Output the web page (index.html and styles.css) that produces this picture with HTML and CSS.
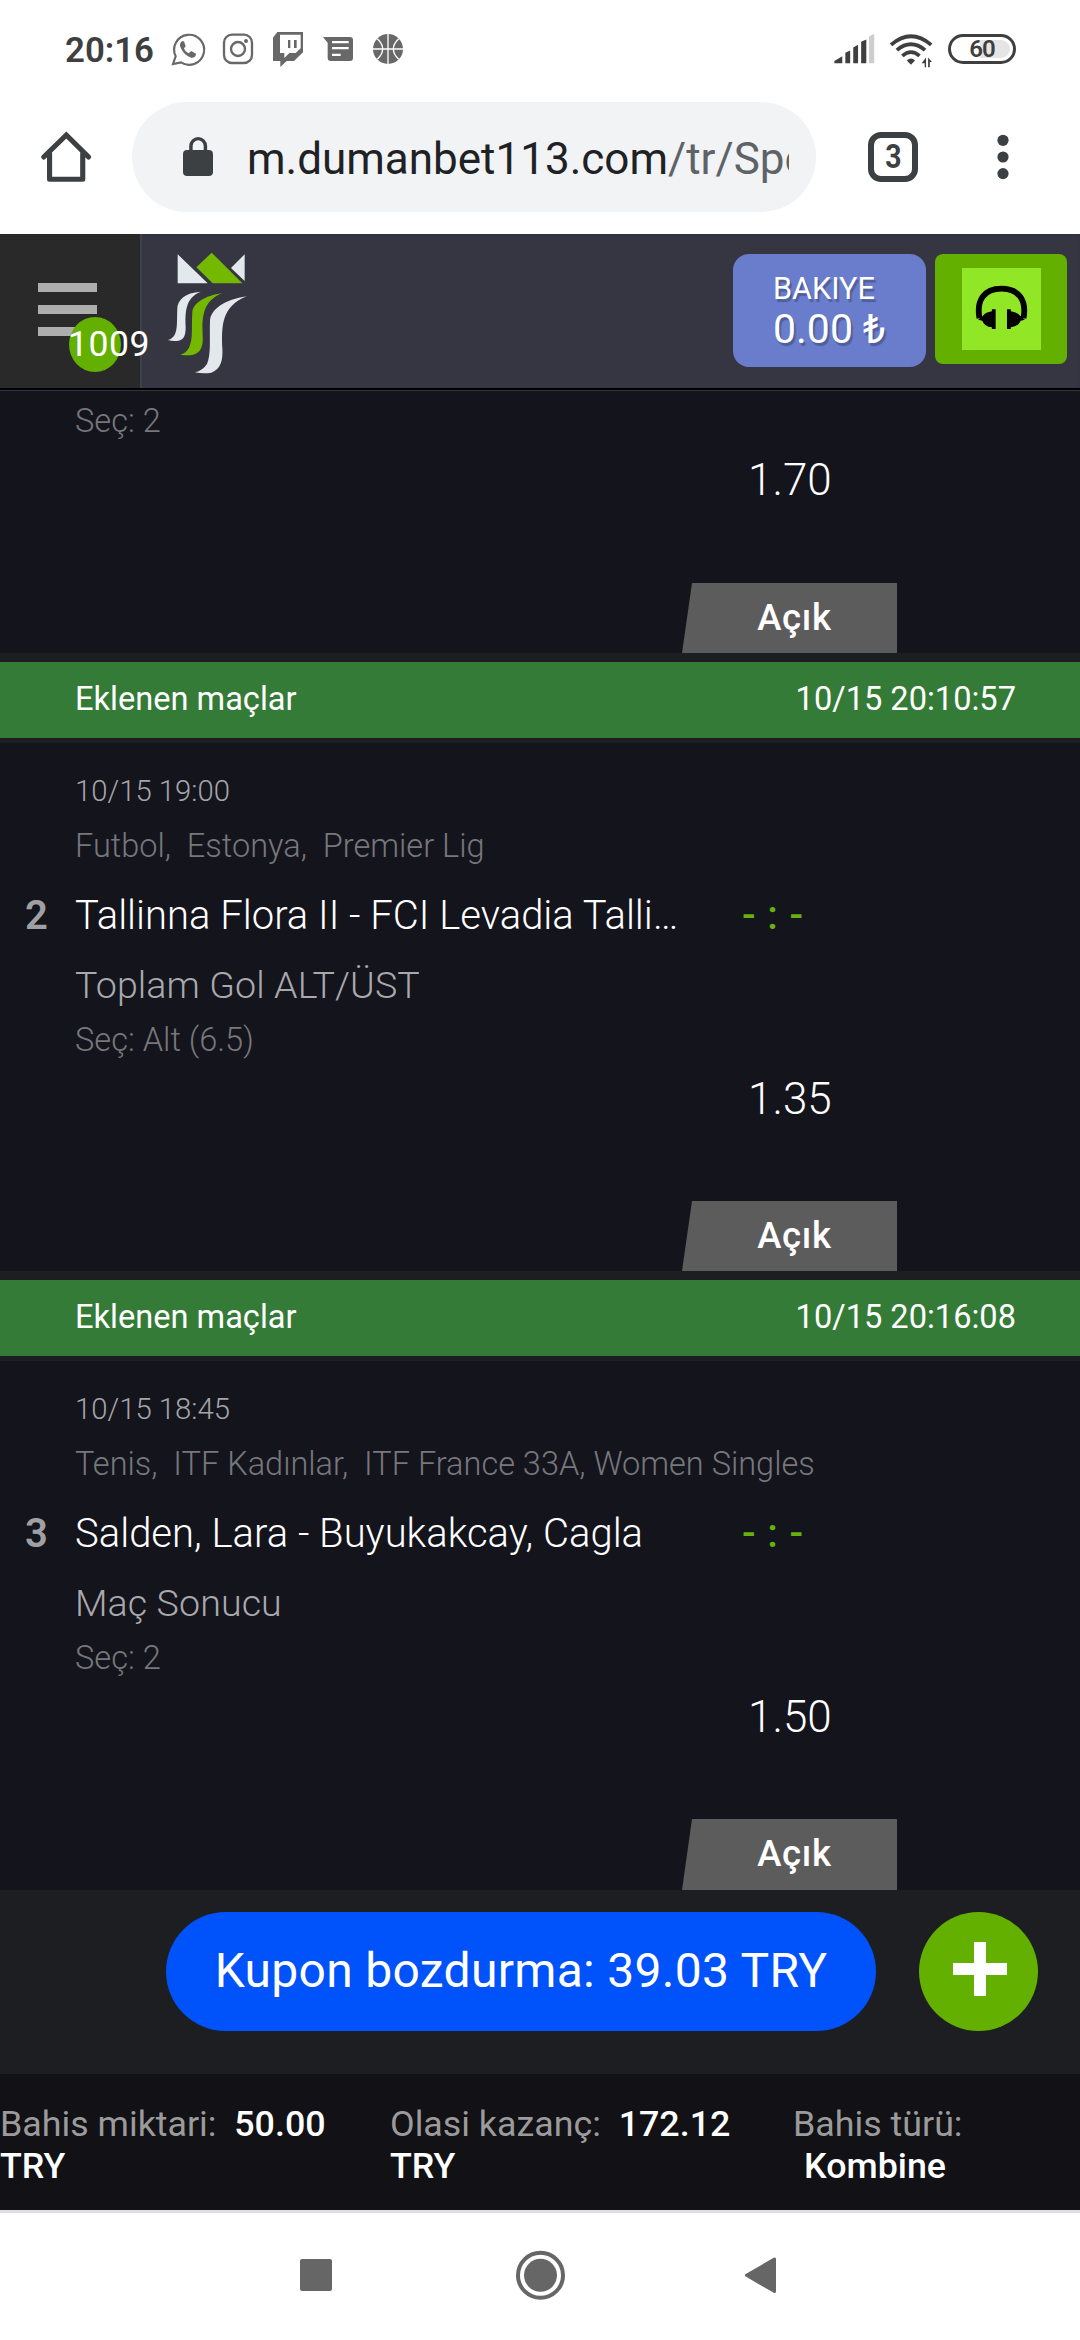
FILE: index.html
```html
<!DOCTYPE html>
<html lang="tr">
<head>
<meta charset="utf-8">
<title>Kuponlar</title>
<link rel="stylesheet" href="styles.css">
</head>
<body>
<div class="status">
  <span class="clock">20:16</span>
  <svg class="notifications" viewBox="0 0 750 150" fill="none" stroke="#686868">
    <path d="M24 117L32 94A45 45 0 1 1 48 112Z" stroke-width="6.5"/>
    <path d="M51 49C44 55 43 61 49 72C56 86 68 95 79 98C87 99 93 94 93 86L79 78L71 85C64 82 59 76 57 70L62 64L57 49Z" fill="#686868" stroke="none"/>
    <rect x="177" y="29" width="84" height="85" rx="24" stroke-width="7"/>
    <circle cx="219" cy="72" r="21" stroke-width="7"/>
    <circle cx="243" cy="48" r="6" fill="#686868" stroke="none"/>
    <path d="M337 21H414V82L387 108H365L346 126V108H324V38ZM345 29V84H358V99L373 84H392L407 70V29ZM369 45H376V69H369ZM387 45H395V69H387Z" fill="#686868" fill-rule="evenodd" stroke="none"/>
    <path d="M474 36H555Q564 36 564 45V99Q564 108 555 108H497Q488 108 488 99V53ZM501 48V55H551V48ZM501 66V73H551V66ZM501 86V93H527V86Z" fill="#686868" fill-rule="evenodd" stroke="none"/>
    <circle cx="669" cy="72" r="45" fill="#686868" stroke="none"/>
    <path d="M669 27V117M624 72H714M637 41Q669 72 637 103M701 41Q669 72 701 103" stroke="#fff" stroke-width="4"/>
  </svg>
  <svg class="signal" viewBox="850 95 300 110" preserveAspectRatio="none" fill="#3f3f3f">
    <path d="M854 188V181L877 167V188ZM886 188V157L900 150V188ZM909 188V141L923 133V188ZM932 188V124L947 117V188Z"/>
    <path d="M955 188V108L970 101V188Z" fill="#cdcdcd"/>
    <path d="M1019 133Q1077 82 1136 133M1036 149Q1077 114 1118 149M1052 166Q1077 144 1102 166" fill="none" stroke="#3f3f3f" stroke-width="11"/>
    <path d="M1065 180Q1077 168 1089 180L1077 192Z"/>
    <path d="M1121 171V200H1117V188H1108ZM1127 200V171L1138 184H1132V200Z"/>
  </svg>
  <span class="battery"><span class="charge">60</span></span>
</div>
<div class="browser">
  <svg class="home" viewBox="115 390 155 162" preserveAspectRatio="none" fill="none" stroke="#3c4043" stroke-width="15" stroke-linejoin="round" stroke-linecap="round">
    <path d="M126 471L192 405L257 471" stroke-linejoin="miter"/><path d="M143 461V538H240V461"/>
  </svg>
  <div class="address">
    <svg class="lock" viewBox="531 410 87 116" preserveAspectRatio="none"><rect x="531" y="449" width="87" height="77" rx="12" fill="#3c4043"/><path d="M554 452V437A21 22 0 0 1 596 437V452" fill="none" stroke="#3c4043" stroke-width="10"/></svg>
    <div class="url">m.dumanbet113.com<span>/tr/Sport</span></div>
  </div>
  <div class="tabs"><span>3</span></div>
  <svg class="more" viewBox="0 0 12 46" fill="#3c4043"><circle cx="6" cy="6.3" r="5.6"/><circle cx="6" cy="23" r="5.6"/><circle cx="6" cy="39.6" r="5.6"/></svg>
</div>
<header class="topbar">
  <div class="menu"><i></i><i></i><i></i><span class="badge">1009</span></div>
  <svg class="logo" viewBox="0 0 360 450">
    <g fill="#e3e8ed">
      <path d="M83 43L173 130H83ZM284 43V123L243 84Z"/>
      <path d="M152 155C105 158 83 180 82 205C80 240 84 270 72 288Q64 298 54 300Q68 304 86 302C104 298 107 282 107 260C106 220 104 174 152 155Z"/>
      <path d="M290 169C225 178 182 208 180 242C178 300 184 340 171 372Q158 392 135 397Q160 402 184 398C213 388 219 360 217 325C215 260 213 200 290 169Z"/>
    </g>
    <path fill="#74b800" d="M185 38L277 130H188L139 82ZM216 160C165 167 129 190 127 216C124 258 130 298 117 323Q108 339 91 344Q112 348 130 344C154 338 160 315 158 288C156 235 156 184 216 160Z"/>
  </svg>
  <div class="balance"><span>BAKIYE</span><b>0.00 ₺</b></div>
  <div class="support">
    <svg viewBox="1225 129 230 246" preserveAspectRatio="none">
      <path d="M1276 280C1266 225 1290 191 1340 191S1414 225 1404 280" fill="none" stroke="#000" stroke-width="17"/>
      <path d="M1272 284L1284 287Q1290 305 1312 307V312H1323V253H1312V259Q1294 262 1286 272ZM1408 284L1396 287Q1389 305 1367 307V312H1356V253H1367V259Q1386 262 1394 272Z"/>
    </svg>
  </div>
</header>
<main>
  <section class="bet first">
    <p class="pick">Seç: 2</p>
    <p class="odds">1.70</p>
    <div class="state">Açık</div>
  </section>
  <div class="added"><span>Eklenen maçlar</span><span>10/15 20:10:57</span></div>
  <section class="bet">
    <p class="date">10/15 19:00</p>
    <p class="league">Futbol,&nbsp; Estonya,&nbsp; Premier Lig</p>
    <div class="match"><span class="num">2</span><span class="teams">Tallinna Flora II - FCI Levadia Talli…</span><span class="score">- : -</span></div>
    <p class="market">Toplam Gol ALT/ÜST</p>
    <p class="pick">Seç: Alt (6.5)</p>
    <p class="odds">1.35</p>
    <div class="state">Açık</div>
  </section>
  <div class="added"><span>Eklenen maçlar</span><span>10/15 20:16:08</span></div>
  <section class="bet last">
    <p class="date">10/15 18:45</p>
    <p class="league">Tenis,&nbsp; ITF Kadınlar,&nbsp; ITF France 33A, Women Singles</p>
    <div class="match"><span class="num">3</span><span class="teams">Salden, Lara - Buyukakcay, Cagla</span><span class="score">- : -</span></div>
    <p class="market">Maç Sonucu</p>
    <p class="pick">Seç: 2</p>
    <p class="odds">1.50</p>
    <div class="state">Açık</div>
  </section>
</main>
<div class="actions">
  <div class="cashout">Kupon bozdurma: 39.03 TRY</div>
  <div class="plus"><svg viewBox="0 0 54 54"><path d="M0 27H54M27 0V54" stroke="#fff" stroke-width="12"/></svg></div>
</div>
<footer class="summary">
  <div>Bahis miktari:&nbsp; <b>50.00<br>TRY</b></div>
  <div>Olasi kazanç:&nbsp; <b>172.12<br>TRY</b></div>
  <div>Bahis türü:<br><b class="kind">Kombine</b></div>
</footer>
<nav class="system">
  <svg viewBox="0 0 480 60" fill="#666">
    <rect x="0" y="14" width="32" height="32" rx="2"/>
    <circle cx="240.5" cy="30.3" r="22.5" fill="none" stroke="#666" stroke-width="4"/><circle cx="240.5" cy="30.3" r="16.5"/>
    <path d="M446.5 30.3L474.5 14V46.5Z" stroke="#666" stroke-width="3" stroke-linejoin="round"/>
  </svg>
</nav>
</body>
</html>
```

FILE: styles.css
```css
* { box-sizing: border-box; margin: 0; padding: 0; }
body {
  width: 1080px; height: 2340px; overflow: hidden;
  background: #fff; color: #fff;
  font-family: Roboto, "Liberation Sans", sans-serif;
  display: flex; flex-direction: column;
}
svg { display: block; flex: none; }
b { font-weight: 500; }

.status { height: 102px; flex: none; display: flex; align-items: flex-start; color: #3f3f3f; }
.clock { width: 100px; margin: 29px 0 0 65px; font-size: 34.8px; line-height: 42px; font-weight: 600; }
.notifications { width: 250px; height: 50px; margin-top: 25px; }
.signal { width: 103px; height: 37px; margin: 32px 0 0 418px; }
.battery { width: 68px; height: 30px; margin: 34px 0 0 12px; border: 3px solid #3f3f3f; border-radius: 15px; padding: 3px; }
.charge {
  display: block; height: 18px; border-radius: 9px; line-height: 19px; text-align: center;
  font-size: 24px; font-weight: 600; letter-spacing: -1px;
  background: linear-gradient(90deg, #fff 46%, #e5e5e5 46%);
}

.browser { height: 132px; flex: none; display: flex; align-items: flex-start; }
.home { width: 53px; height: 54px; margin: 28px 0 0 40px; }
.address { width: 684px; height: 110px; margin-left: 39px; padding-left: 51px; border-radius: 55px; background: #f1f3f5; display: flex; }
.lock { width: 30px; height: 39px; margin-top: 35px; }
.url { width: 542px; margin-left: 34px; overflow: hidden; white-space: nowrap; font-size: 44px; line-height: 114px; color: #202124; }
.url span { color: #5f6368; }
.tabs { width: 50px; height: 50px; margin: 30px 0 0 52px; border: 6px solid #3c4043; border-radius: 13px; color: #3c4043; display: flex; justify-content: center; }
.tabs span { font-size: 33px; line-height: 37px; font-weight: 700; transform: scaleX(.86); }
.more { width: 12px; height: 46px; margin: 32px 0 0 79px; }

.topbar { height: 156px; flex: none; display: flex; background: #353642; border-bottom: 2px solid #000; box-shadow: inset 0 2px 3px #31323c; }
.menu { position: relative; width: 142px; padding: 49px 0 0 38px; background: #292929; border-right: 2px solid #3e404c; display: flex; flex-direction: column; gap: 13px; }
.menu i { width: 59px; height: 9px; background: #adadad; }
.badge { position: absolute; left: 69px; top: 83px; width: 52px; height: 55px; border-radius: 50%; background: #63b000; font-size: 35.6px; line-height: 54px; letter-spacing: .5px; text-indent: -1px; white-space: nowrap; }
.logo { width: 120px; height: 150px; margin: 6px 0 0 8px; }
.balance { width: 193px; height: 113px; margin: 20px 0 0 463px; padding: 17px 0 0 40px; border-radius: 16px; background: #697dcc; display: flex; flex-direction: column; text-shadow: 2px 3px 1px rgba(0,0,0,.25); }
.balance span { font-size: 30.6px; line-height: 36px; }
.balance b { font-size: 41px; line-height: 44px; font-weight: 400; }
.support { width: 132px; height: 110px; margin: 20px 0 0 9px; padding: 14px 27px 0; border-radius: 8px; background: #63b000; }
.support svg { width: 79px; height: 82px; background: #91e626; }

main { display: flow-root; flex: none; background: #1d1e22; }
.bet { height: 528px; padding: 18px 0 0 75px; background: #14141c; display: flex; flex-direction: column; }
.first { height: 263px; padding-top: 1px; border-top: 1px solid #353540; }
.last { height: 529px; }
.date { font-size: 29.3px; line-height: 60px; font-weight: 300; color: #a4a4a9; }
.league { font-size: 32.5px; line-height: 50px; font-weight: 300; color: #77777c; }
.match { height: 88px; margin-left: -51px; display: flex; font-size: 40px; line-height: 90px; }
.num { width: 51px; padding-left: 1px; font-weight: 600; color: #a0a0a4; }
.teams { width: 667px; font-weight: 300; white-space: nowrap; }
.score { font-weight: 500; color: #66b010; letter-spacing: .9px; }
.market { font-size: 37.6px; line-height: 52px; font-weight: 300; letter-spacing: .1px; color: #a9a9ad; }
.pick { font-size: 32.6px; line-height: 58px; font-weight: 300; color: #77777c; }
.odds { margin-left: 673px; font-size: 44px; line-height: 60px; font-weight: 300; }
.state { width: 215px; height: 70px; margin: auto 0 0 607px; padding-left: 10px; background: #5c5c5c; clip-path: polygon(10px 0, 100% 0, 100% 100%, 0 100%); text-align: center; font-size: 36.5px; line-height: 69px; font-weight: 500; letter-spacing: .7px; }
.last .state { height: 71px; }
.added { height: 76px; margin: 9px 0 5px; padding: 0 64px 0 75px; background: #357b38; display: flex; justify-content: space-between; font-size: 32.6px; line-height: 74px; }

.actions { height: 184px; flex: none; padding: 22px 42px 0 166px; background: #1d1e22; display: flex; justify-content: space-between; }
.cashout { width: 710px; height: 119px; border-radius: 60px; background: #0052fa; text-align: center; font-size: 48px; line-height: 117px; letter-spacing: .3px; }
.plus { width: 119px; height: 119px; border-radius: 50%; background: #63b000; padding: 30px 0 0 34px; }
.plus svg { width: 54px; height: 54px; }

.summary { height: 139px; flex: none; padding-top: 29px; background: #111116; border-bottom: 3px solid #dedede; display: grid; grid-template-columns: 390px 403px 287px; font-size: 35.8px; line-height: 42px; color: #9b9b9b; }
.summary b { color: #fff; }
.kind { padding-left: 11px; }
.system { padding: 32px 0 0 300px; }
.system svg { width: 480px; height: 60px; }
```
